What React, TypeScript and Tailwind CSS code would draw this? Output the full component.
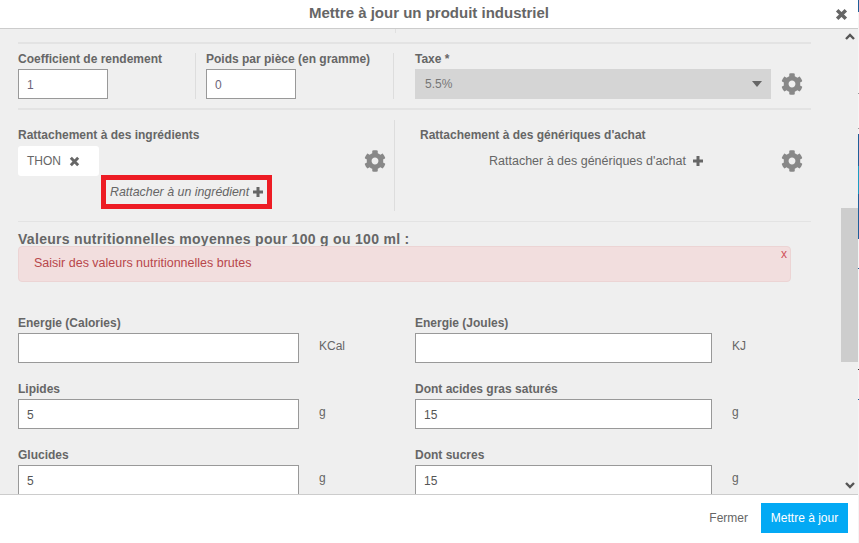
import { FaCog } from 'react-icons/fa'

function Cross({ className }: { className: string }) {
  return (
    <svg viewBox="0 0 12 12" className={className}>
      <path d="M2 2 L10 10 M10 2 L2 10" stroke="#666" strokeWidth="3.2" fill="none" />
    </svg>
  )
}

function Plus() {
  return (
    <svg viewBox="0 0 10 10" className="h-[10px] w-[10px] shrink-0">
      <path d="M5 0 V10 M0 5 H10" stroke="#666" strokeWidth="3" fill="none" />
    </svg>
  )
}

function Chevron({ up }: { up?: boolean }) {
  return (
    <svg viewBox="0 0 10 7" className="h-[7px] w-[10px]">
      <path d={up ? 'M1 6 L5 2 L9 6' : 'M1 1 L5 5 L9 1'} stroke="#555" strokeWidth="2.4" fill="none" />
    </svg>
  )
}

function Field({ label, value, unit, narrow }: { label: string; value?: string; unit: string; narrow?: boolean }) {
  return (
    <div className="h-[66px]">
      <div className="h-[18px] pt-px text-xs leading-[14px] font-bold text-[#666]">{label}</div>
      <div className="flex">
        <div className={`h-[30px] shrink-0 border border-[#999] bg-white pl-2 text-xs leading-[30px] text-[#555] ${narrow ? 'w-[281px]' : 'w-[297px]'}`}>{value}</div>
        <div className="ml-5 pt-[6px] text-xs leading-[14px] text-[#666]">{unit}</div>
      </div>
    </div>
  )
}

// 1px of the page behind the modal, visible on the right edge
function EdgeStrip() {
  return (
    <div className="flex h-[543px] w-px shrink-0 flex-col bg-[#f5f5f5]">
      <div className="h-[12px] bg-[#1f5f99]" />
      <div className="mt-[81px] h-px bg-[#999]" />
      <div className="mt-[34px] h-px bg-[#999]" />
      <div className="mt-[5px] h-[32px] bg-[#1f5f99]" />
      <div className="h-[28px] bg-[#1b9cc4]" />
      <div className="h-[45px] bg-[#1f5f99]" />
      <div className="mt-[29px] h-px bg-[#1f5f99]" />
      <div className="mt-[100px] h-px bg-[#333]" />
      <div className="mt-[29px] h-px bg-[#1f5f99]" />
    </div>
  )
}

export default function App() {
  return (
    <div className="flex h-[543px] w-[859px] overflow-hidden bg-white font-['Liberation_Sans',Arial,sans-serif] text-[#666]">
      <div className="flex w-[858px] flex-col">
        <div className="relative h-[29px] shrink-0 border-b border-[#ccc] bg-white text-center text-[15px] leading-[26px] font-bold text-[#666]">
          Mettre à jour un produit industriel
          <Cross className="absolute top-[8px] right-[10px] h-[13px] w-[13px]" />
        </div>

        <div className="flex min-h-0 flex-1">
          <div className="w-[841px] shrink-0 overflow-hidden bg-[#efefef] pl-[18px]">
            <div className="w-[793px]">
              <div className="ml-[377px] h-[4px] w-px bg-[#e0e0e0]" />
              <div className="mt-[9px] h-[2px] bg-[#e3e3e3]" />

              <div className="mt-[9px] flex h-[46px]">
                <div className="w-[178px] border-r border-[#ddd]">
                  <div className="h-[16px] text-xs leading-[12px] font-bold text-[#666]">Coefficient de rendement</div>
                  <div className="h-[30px] w-[90px] border border-[#999] bg-white pl-2 text-xs leading-[30px] text-[#6b6478]">1</div>
                </div>
                <div className="w-[198px] border-r border-[#ddd] pl-[10px]">
                  <div className="h-[16px] text-xs leading-[12px] font-bold text-[#666]">Poids par pièce (en gramme)</div>
                  <div className="h-[30px] w-[90px] border border-[#999] bg-white pl-2 text-xs leading-[30px] text-[#6b6478]">0</div>
                </div>
                <div className="pl-[21px]">
                  <div className="h-[16px] text-xs leading-[12px] font-bold text-[#666]">Taxe *</div>
                  <div className="flex items-center">
                    <div className="flex h-[30px] w-[356px] items-center justify-between bg-[#d5d5d5] pr-[9px] pl-[10px] text-xs text-[#777]">
                      5.5%
                      <span className="h-0 w-0 border-x-[5.5px] border-t-[6px] border-x-transparent border-t-[#666]" />
                    </div>
                    <FaCog className="ml-[10px] text-[22px] text-[#888]" />
                  </div>
                </div>
              </div>

              <div className="mt-[9px] h-[2px] bg-[#e3e3e3]" />

              <div className="mt-[10px] flex h-[91px]">
                <div className="relative w-[377px] border-r border-[#ddd]">
                  <div className="h-[16px] pt-[8px] text-xs leading-[14px] font-bold text-[#666]">Rattachement à des ingrédients</div>
                  <div className="mt-[10px] flex h-[30px] w-[81px] items-center rounded-[3px] bg-white pl-[9px] text-xs text-[#666]">
                    THON
                    <Cross className="ml-2 h-[11px] w-[11px]" />
                  </div>
                  <div className="mt-[-1px] ml-[83px] flex h-[34px] w-[171px] items-center border-[5px] border-[#ed1c24] pl-1 text-[12.4px] text-[#666] italic">
                    Rattacher à un ingrédient
                    <span className="ml-[4px]"><Plus /></span>
                  </div>
                  <FaCog className="absolute top-[30px] left-[346px] text-[22px] text-[#888]" />
                </div>
                <div className="relative flex-1 pl-[25px]">
                  <div className="h-[16px] pt-[8px] text-xs leading-[14px] font-bold text-[#666]">Rattachement à des génériques d'achat</div>
                  <div className="mt-[10px] ml-[69px] flex h-[30px] items-center text-[12.5px] text-[#666]">
                    Rattacher à des génériques d'achat
                    <span className="ml-[7px]"><Plus /></span>
                  </div>
                  <FaCog className="absolute top-[30px] left-[386px] text-[22px] text-[#888]" />
                </div>
              </div>

              <div className="mt-[10px] h-[1px] bg-[#e3e3e3]" />

              <div className="mt-[10px] h-[14px] text-sm leading-[14px] font-bold tracking-[0.3px] text-[#666]">Valeurs nutritionnelles moyennes pour 100 g ou 100 ml :</div>

              <div className="relative h-[36px] w-[773px] rounded-[4px] border border-[#ecd4d4] bg-[#f2dede] pl-[15px] text-[12.5px] leading-[33px] text-[#b8474b]">
                Saisir des valeurs nutritionnelles brutes
                <span className="absolute top-[-1px] right-[3px] text-xs leading-[16px] text-[#d0505a]">x</span>
              </div>

              <div className="mt-[33px] grid grid-cols-[397px_1fr]">
                <Field label="Energie (Calories)" unit="KCal" narrow />
                <Field label="Energie (Joules)" unit="KJ" />
                <Field label="Lipides" value="5" unit="g" narrow />
                <Field label="Dont acides gras saturés" value="15" unit="g" />
                <Field label="Glucides" value="5" unit="g" narrow />
                <Field label="Dont sucres" value="15" unit="g" />
              </div>
            </div>
          </div>

          <div className="flex w-[17px] shrink-0 flex-col bg-[#efefef]">
            <div className="flex h-[179px] justify-center pt-[4px]">
              <Chevron up />
            </div>
            <div className="h-[154px] bg-[#cdcdcd]" />
            <div className="flex flex-1 items-end justify-center pb-[5px]">
              <Chevron />
            </div>
          </div>
        </div>

        <div className="flex h-[49px] shrink-0 items-center justify-end border-t border-[#ccc] bg-white pr-[10px] pb-[2px]">
          <span className="mr-[13px] text-xs text-[#666]">Fermer</span>
          <div className="flex h-[30px] w-[87px] items-center justify-center bg-[#03a9f4] text-xs text-white">Mettre à jour</div>
        </div>
      </div>
      <EdgeStrip />
    </div>
  )
}
